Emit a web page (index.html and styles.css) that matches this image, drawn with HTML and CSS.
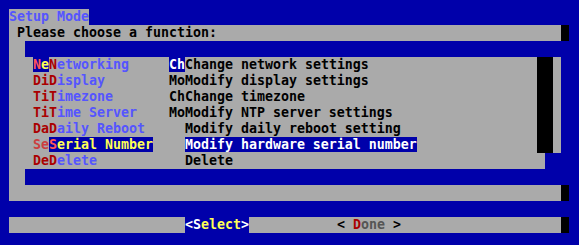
FILE: index.html
```html
<!DOCTYPE html>
<html lang="en">
<head>
  <meta charset="UTF-8" />
  <title>Setup Mode</title>
  <link rel="stylesheet" href="styles.css">
</head>
<body>
  <div class="screen">
    <div class="row"><span class="title">Setup Mode</span></div>

    <div class="row">
      <span class="gray wide"> Please choose a function:</span><span class="shadow"></span>
    </div>

    <div class="row"><span class="gray edge"></span></div>

    <div class="row">
      <span class="gray list">   <span class="hot"><span class="hr">N</span><span class="hy">e</span></span><span class="dr">N</span><span class="lb">etworking</span>     <span class="sel-w">Ch</span>Change network settings</span><span class="bar"></span><span class="gray cell"></span>
    </div>
    <div class="row">
      <span class="gray list">   <span class="dr">DiD</span><span class="lb">isplay</span>        MoModify display settings</span><span class="bar"></span><span class="gray cell"></span>
    </div>
    <div class="row">
      <span class="gray list">   <span class="dr">TiT</span><span class="lb">imezone</span>       ChChange timezone</span><span class="bar"></span><span class="gray cell"></span>
    </div>
    <div class="row">
      <span class="gray list">   <span class="dr">TiT</span><span class="lb">ime Server</span>    MoModify NTP server settings</span><span class="bar"></span><span class="gray cell"></span>
    </div>
    <div class="row">
      <span class="gray list">   <span class="dr">DaD</span><span class="lb">aily Reboot</span>     Modify daily reboot setting</span><span class="bar"></span><span class="gray cell"></span>
    </div>
    <div class="row">
      <span class="gray list">   <span class="mr">Se</span><span class="hot"><span class="hr">S</span><span class="hy">erial Number</span></span>    <span class="sel-w">Modify hardware serial number</span></span><span class="bar"></span><span class="gray cell"></span>
    </div>
    <div class="row">
      <span class="gray last">   <span class="dr">DeD</span><span class="lb">elete</span>           Delete</span>
    </div>

    <div class="row"><span class="gray edge"></span></div>

    <div class="row">
      <span class="gray wide"></span><span class="shadow"></span>
    </div>

    <div class="row"></div>

    <div class="row">
      <span class="gray left"></span><span class="button"><span class="wt">&lt;S</span><span class="hy">elect</span><span class="wt">&gt;</span></span><span class="gray right">           &lt; <span class="dr">D</span><span class="dim">one</span> &gt;</span><span class="shadow"></span>
    </div>

    <div class="row"></div>
  </div>
</body>
</html>
```

FILE: styles.css
```css
body {
  margin: 0;
  background: #0000aa;
}
.screen {
  padding: 9px 0 0 9px;
  font-family: "DejaVu Sans Mono", monospace;
  font-weight: bold;
  font-size: 13.29px;
  color: #000;
}
.row {
  display: flex;
  height: 16px;
  line-height: 16px;
  white-space: pre;
}
.gray {
  background: #aaaaaa;
}
.title {
  width: 80px;
  background: #aaaaaa;
  color: #5555ff;
}
.wide {
  width: 552px;
}
.edge {
  width: 16px;
}
.list {
  width: 528px;
}
.last {
  width: 536px;
}
.cell {
  width: 8px;
}
.shadow {
  width: 8px;
  background: #000;
}
.bar {
  width: 16px;
  background: #000;
}
.left {
  width: 176px;
}
.right {
  width: 312px;
}
.button {
  width: 64px;
  background: #0000aa;
}
.hot {
  background: #0000aa;
}
.sel-w {
  background: #0000aa;
  color: #fff;
}
.hr {
  color: #ff5555;
}
.hy {
  color: #ffff55;
}
.dr {
  color: #aa0000;
}
.mr {
  color: #cc3f3f;
}
.lb {
  color: #5555ff;
}
.wt {
  color: #fff;
}
.dim {
  color: #555555;
}
```
